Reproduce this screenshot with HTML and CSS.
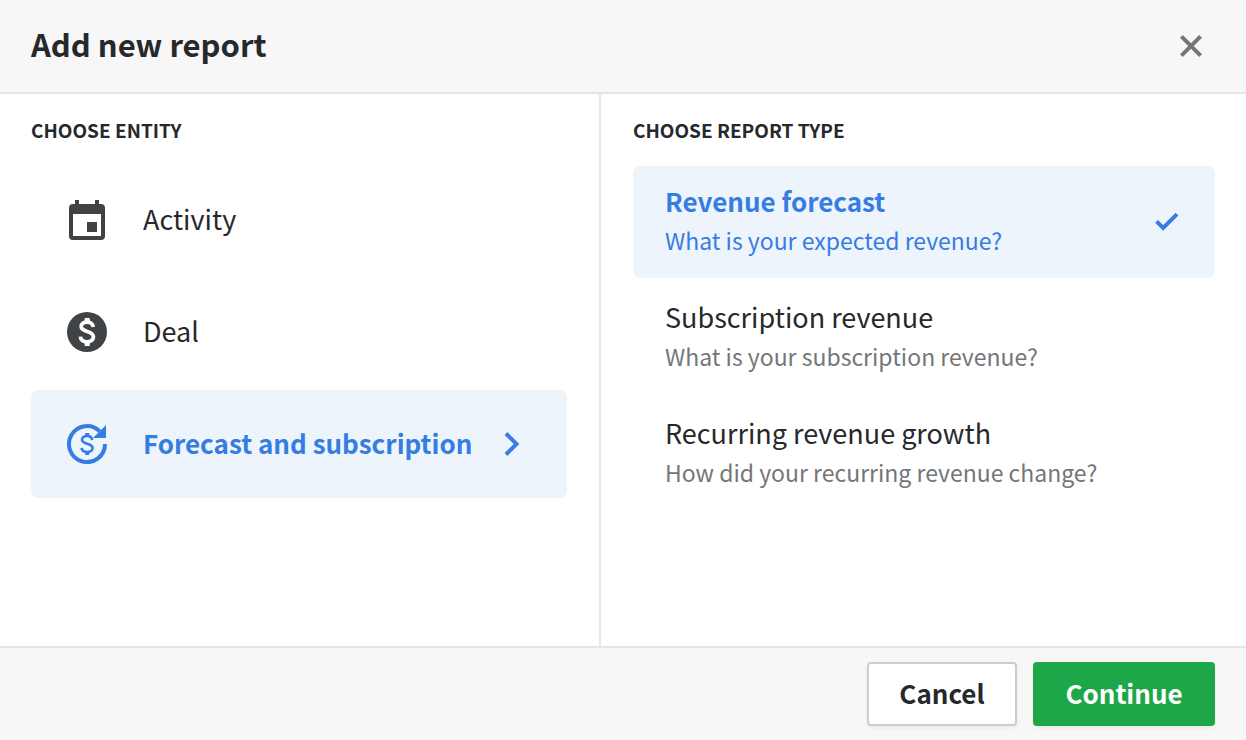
FILE: index.html
```html
<!DOCTYPE html>
<html lang="en">
<head>
<meta charset="utf-8">
<title>Add new report</title>
<link rel="stylesheet" href="styles.css">
</head>
<body>
<main class="dialog" role="dialog" aria-labelledby="dialog-title">
  <header class="dialog-header">
    <h1 class="dialog-title" id="dialog-title">Add new report</h1>
    <button class="close" type="button" aria-label="Close">
      <svg width="24" height="24" viewBox="0 0 24 24" fill="none" stroke="currentColor" stroke-width="4"><path d="M2.4 2.4 21.6 21.6M21.6 2.4 2.4 21.6"/></svg>
    </button>
  </header>
  <div class="panels">
    <section class="panel panel-entity">
      <h2 class="panel-title">CHOOSE ENTITY</h2>
      <div class="options">
        <button class="entity" type="button">
          <svg class="entity-icon" width="40" height="40" viewBox="0 0 40 40" fill="currentColor"><path fill-rule="evenodd" d="M8 0h4v4h16V0h4v4h2a4 4 0 0 1 4 4v28a4 4 0 0 1-4 4H6a4 4 0 0 1-4-4V8a4 4 0 0 1 4-4h2zM6 14v22h28V14z"/><path d="M20 22h10v10H20z"/></svg>
          <span class="entity-name">Activity</span>
        </button>
        <button class="entity" type="button">
          <svg class="entity-icon" width="40" height="40" viewBox="0 0 40 40"><circle cx="20" cy="20" r="20" fill="currentColor"/><path d="M26.200 15c-.2-3-2.600-5-6.200-5-3.400 0-5.800 1.800-5.800 4.600 0 6.200 12.200 3.600 12.200 10.200 0 3.200-2.800 5-6.400 5-3.800 0-6.400-2-6.600-5.200" fill="none" stroke="#fff" stroke-width="3.800"/><path d="M20.200 6v5M20.200 28.500v5.500" stroke="#fff" stroke-width="5"/></svg>
          <span class="entity-name">Deal</span>
        </button>
        <button class="entity selected" type="button" aria-pressed="true">
          <svg class="entity-icon" width="40" height="40" viewBox="0 0 40 40" fill="none" stroke="currentColor"><path d="M38 20A18 18 0 1 1 32.700 7.300" stroke-width="4"/><path d="M39 1v13H26z" fill="currentColor" stroke="none"/><path d="M25.200 16.200c-.2-2.600-2.200-4.200-5.200-4.200s-5 1.600-5 3.800c0 5 10.600 3 10.600 8.200 0 2.500-2.400 4-5.400 4-3.200 0-5.400-1.600-5.600-4.200" stroke-width="2.600"/><path d="M20.200 9v4M20.200 27v4" stroke-width="4"/></svg>
          <span class="entity-name">Forecast and subscription</span>
          <svg class="chevron" width="16" height="24" viewBox="0 0 16 24" fill="none" stroke="currentColor" stroke-width="4"><path d="M2 1.500 12.500 12 2 22.500"/></svg>
        </button>
      </div>
    </section>
    <section class="panel panel-type">
      <h2 class="panel-title">CHOOSE REPORT TYPE</h2>
      <div class="options">
        <button class="report selected" type="button" aria-pressed="true">
          <span class="report-text"><span class="report-name">Revenue forecast</span><span class="report-hint">What is your expected revenue?</span></span>
          <svg width="24" height="20" viewBox="0 0 24 20" fill="none" stroke="currentColor" stroke-width="4"><path d="M1.600 9.400 8.200 16 22 2.200"/></svg>
        </button>
        <button class="report" type="button">
          <span class="report-text"><span class="report-name">Subscription revenue</span><span class="report-hint">What is your subscription revenue?</span></span>
        </button>
        <button class="report" type="button">
          <span class="report-text"><span class="report-name">Recurring revenue growth</span><span class="report-hint">How did your recurring revenue change?</span></span>
        </button>
      </div>
    </section>
  </div>
  <footer class="dialog-footer">
    <button class="action cancel" type="button">Cancel</button>
    <button class="action continue" type="button">Continue</button>
  </footer>
</main>
</body>
</html>
```

FILE: styles.css
```css
* { box-sizing: border-box; }

body {
  margin: 0;
  background: #f7f7f7;
  color: #26292c;
  font-family: "Noto Sans CJK SC", "Noto Sans", sans-serif;
}

button {
  margin: 0;
  padding: 0;
  border: 0;
  background: none;
  color: inherit;
  font: inherit;
  text-align: left;
  cursor: pointer;
}

svg { display: block; flex: none; }

.dialog {
  display: flex;
  flex-direction: column;
  min-height: 100vh;
}

.dialog-header {
  display: flex;
  align-items: center;
  justify-content: space-between;
  padding: 22px 43px 22px 31px;
  border-bottom: 2px solid #e5e5e5;
}

.dialog-title {
  margin: 0;
  padding-bottom: 4px;
  font-size: 31px;
  line-height: 44px;
  font-weight: 700;
}

.close { color: #747678; }

.panels {
  flex: 1;
  display: grid;
  grid-template-columns: 601fr 645fr;
  background: #fff;
}

.panel { padding: 20px 31px 32px 32px; }

.panel-entity {
  padding: 20px 32px 32px 31px;
  border-right: 2px solid #e5e5e5;
}

.panel-title {
  margin: 0 0 20px;
  font-size: 19px;
  line-height: 32px;
  font-weight: 700;
}

.options {
  display: flex;
  flex-direction: column;
  gap: 4px;
}

.entity {
  display: flex;
  align-items: center;
  padding: 34px 36px;
  border-radius: 8px;
  font-size: 27px;
  line-height: 38px;
}

.entity-name { padding-bottom: 2px; }

.entity-icon {
  margin-right: 36px;
  color: #404346;
}

.chevron { margin-left: 32px; }

.report {
  display: flex;
  align-items: center;
  justify-content: space-between;
  padding: 15px 36px 15px 32px;
  border-radius: 8px;
}

.report-text { padding-bottom: 4px; }

.report-name,
.report-hint { display: block; }

.report-name {
  font-size: 27px;
  line-height: 40px;
}

.report-hint {
  color: #747678;
  font-size: 23px;
  line-height: 38px;
}

.selected {
  background: #edf4fc;
  color: #367de2;
}

.selected .entity-icon,
.selected .report-hint { color: inherit; }

.selected .entity-name,
.selected .report-name {
  font-size: 26px;
  font-weight: 700;
}

.dialog-footer {
  display: flex;
  justify-content: flex-end;
  gap: 16px;
  padding: 14px 31px;
  border-top: 2px solid #e5e5e5;
}

.action {
  min-width: 150px;
  padding: 9px 30px 11px;
  border: 2px solid #cbcccd;
  border-radius: 4px;
  background: #fff;
  font-size: 26px;
  line-height: 40px;
  font-weight: 700;
  text-align: center;
  box-shadow: 0 2px 4px rgba(0, 0, 0, 0.05);
}

.continue {
  min-width: 182px;
  border-color: #1ea748;
  background: #1ea748;
  color: #fff;
}
```
